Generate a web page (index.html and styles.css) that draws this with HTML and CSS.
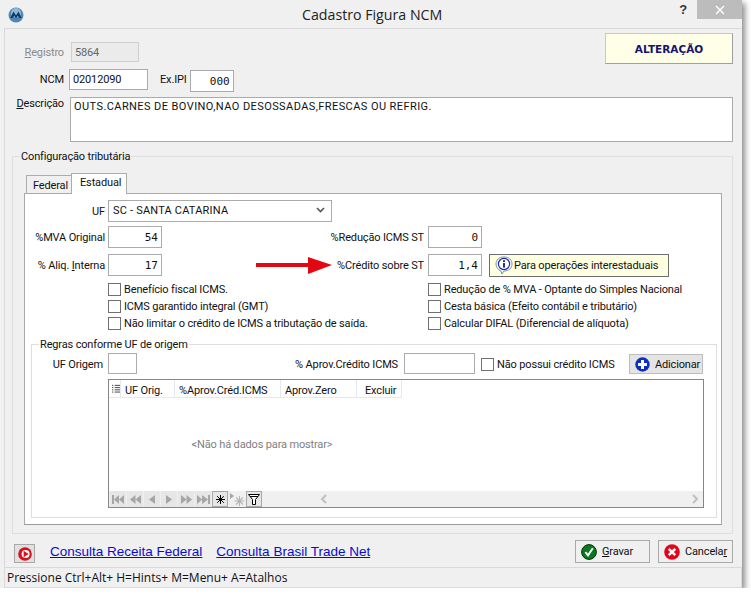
FILE: index.html
```html
<!DOCTYPE html>
<html lang="pt-BR">
<head>
    <meta charset="UTF-8">
    <meta name="viewport" content="width=device-width, initial-scale=1.0">
    <title>Cadastro Figura NCM</title>
    <link rel="stylesheet" href="styles.css">
</head>
<body>
    <div class="window">
        <div class="titlebar">
            <svg class="app-icon" width="16" height="16" viewBox="0 0 16 16">
                <circle cx="8" cy="8" r="7.5" fill="#4f86b5"/>
                <circle cx="8" cy="6" r="5" fill="#8fb8d8"/>
                <path d="M2.5 11 L5.5 4.5 L8 8.5 L10.5 4.5 L13.5 11 L11 11 L10 8.5 L8 11.5 L6 8.5 L5 11 Z" fill="#10385f"/>
            </svg>
            <span class="title">Cadastro Figura NCM</span>
            <span class="help">?</span>
            <span class="close">
                <svg width="10" height="10" viewBox="0 0 10 10"><path d="M1 1 L9 9 M9 1 L1 9" stroke="#fff" stroke-width="1.4"/></svg>
            </span>
        </div>

        <div class="client">
            <div class="head">
                <div class="head-fields">
                    <div class="row row-registro">
                        <label class="head-label disabled"><u>R</u>egistro</label>
                        <input class="input input-registro" type="text" value="5864" readonly>
                    </div>
                    <div class="row row-ncm">
                        <label class="head-label">NCM</label>
                        <input class="input input-ncm" type="text" value="02012090">
                        <label class="label-ipi">Ex.IPI</label>
                        <input class="input input-ipi num" type="text" value="000">
                    </div>
                </div>
                <div class="mode">ALTERAÇÃO</div>
            </div>
            <div class="row row-desc">
                <label class="head-label"><u>D</u>escrição</label>
                <textarea class="input input-desc">OUTS.CARNES DE BOVINO,NAO DESOSSADAS,FRESCAS OU REFRIG.</textarea>
            </div>

            <fieldset class="group">
                <legend>Configuração tributária</legend>
                <div class="tabs">
                    <div class="tab">Federal</div>
                    <div class="tab tab-active">Estadual</div>
                </div>
                <div class="panel">
                    <div class="row row-uf">
                        <label class="col-label">UF</label>
                        <div class="select">
                            <span>SC - SANTA CATARINA</span>
                            <svg width="9" height="6" viewBox="0 0 9 6"><path d="M1 1 L4.5 4.5 L8 1" fill="none" stroke="#555" stroke-width="1.6"/></svg>
                        </div>
                    </div>
                    <div class="row row-mva">
                        <label class="col-label">%MVA Original</label>
                        <input class="input input-pct num" type="text" value="54">
                        <div class="mid-label">%Redução ICMS ST</div>
                        <input class="input input-pct num input-right" type="text" value="0">
                    </div>
                    <div class="row row-aliq">
                        <label class="col-label">% Aliq. <u>I</u>nterna</label>
                        <input class="input input-pct num" type="text" value="17">
                        <div class="mid-label">
                            <svg class="arrow" width="76" height="17" viewBox="0 0 76 17">
                                <rect x="0" y="6" width="53" height="4" fill="#e30613"/>
                                <polygon points="52,0 76,8 52,17" fill="#e30613"/>
                            </svg>
                            %Crédito sobre ST
                        </div>
                        <input class="input input-pct num input-right" type="text" value="1,4">
                        <div class="hint">
                            <svg width="18" height="19" viewBox="0 0 18 19">
                                <path d="M9 1 C4 1 1 4 1 8 C1 11 3 14 6 15 L7 18 L9 15 C14 15 17 12 17 8 C17 4 14 1 9 1 Z" fill="#fff" stroke="#7d8fb0"/>
                                <circle cx="9" cy="8" r="5.6" fill="#fff" stroke="#1d2f9e" stroke-width="1.2"/>
                                <rect x="8" y="4.2" width="2" height="1.8" fill="#1d2f9e"/>
                                <rect x="8" y="7" width="2" height="4.6" fill="#1d2f9e"/>
                            </svg>
                            <span>Para operações interestaduais</span>
                        </div>
                    </div>
                    <div class="checks">
                        <label class="check"><input type="checkbox">Benefício fiscal ICMS.</label>
                        <label class="check"><input type="checkbox">Redução de % MVA - Optante do Simples Nacional</label>
                        <label class="check"><input type="checkbox">ICMS garantido integral (GMT)</label>
                        <label class="check"><input type="checkbox">Cesta básica (Efeito contábil e tributário)</label>
                        <label class="check"><input type="checkbox">Não limitar o crédito de ICMS a tributação de saída.</label>
                        <label class="check"><input type="checkbox">Calcular DIFAL (Diferencial de alíquota)</label>
                    </div>

                    <fieldset class="group group-rules">
                        <legend>Regras conforme UF de origem</legend>
                        <div class="row row-rules">
                            <label class="rules-label">UF Origem</label>
                            <input class="input input-uf" type="text">
                            <div class="aprov-label">% Aprov.Crédito ICMS</div>
                            <input class="input input-aprov" type="text">
                            <label class="check check-inline"><input type="checkbox">Não possui crédito ICMS</label>
                            <button class="btn btn-add">
                                <svg width="15" height="15" viewBox="0 0 15 15">
                                    <circle cx="7.5" cy="7.5" r="7.2" fill="#0b2fc4"/>
                                    <path d="M6 3 H9 V6 H12 V9 H9 V12 H6 V9 H3 V6 H6 Z" fill="#fff"/>
                                </svg>
                                Adicionar
                            </button>
                        </div>
                        <div class="grid">
                            <div class="grid-head">
                                <div class="cell cell-icon">
                                    <svg width="9" height="9" viewBox="0 0 9 9"><path d="M0 1 H1.5 M3 1 H9 M0 3.5 H1.5 M3 3.5 H9 M0 6 H1.5 M3 6 H9 M0 8.5 H1.5 M3 8.5 H9" stroke="#333"/></svg>
                                </div>
                                <div class="cell cell-uf">UF Orig.</div>
                                <div class="cell cell-aprov">%Aprov.Créd.ICMS</div>
                                <div class="cell cell-zero">Aprov.Zero</div>
                                <div class="cell cell-del">Excluir</div>
                            </div>
                            <div class="grid-empty">&lt;Não há dados para mostrar&gt;</div>
                            <div class="grid-nav">
                                <button class="nav"><svg width="13" height="9" viewBox="0 0 13 9"><path d="M0 0 H2 V9 H0 Z M7 0 V9 L2 4.5 Z M12 0 V9 L7 4.5 Z"/></svg></button>
                                <button class="nav"><svg width="11" height="9" viewBox="0 0 11 9"><path d="M5.5 0 V9 L0 4.5 Z M11 0 V9 L5.5 4.5 Z"/></svg></button>
                                <button class="nav"><svg width="6" height="9" viewBox="0 0 6 9"><path d="M6 0 V9 L0 4.5 Z"/></svg></button>
                                <button class="nav"><svg width="6" height="9" viewBox="0 0 6 9"><path d="M0 0 V9 L6 4.5 Z"/></svg></button>
                                <button class="nav"><svg width="11" height="9" viewBox="0 0 11 9"><path d="M0 0 V9 L5.5 4.5 Z M5.5 0 V9 L11 4.5 Z"/></svg></button>
                                <button class="nav"><svg width="13" height="9" viewBox="0 0 13 9"><path d="M0 0 V9 L5 4.5 Z M5 0 V9 L11 4.5 Z M11 0 H13 V9 H11 Z"/></svg></button>
                                <button class="nav nav-on"><svg width="9" height="9" viewBox="0 0 9 9"><path d="M4.5 0 V9 M0 4.5 H9 M1.2 1.2 L7.8 7.8 M7.8 1.2 L1.2 7.8" stroke="#000" stroke-width="1"/></svg></button>
                                <button class="nav nav-dim"><svg width="15" height="13" viewBox="0 0 15 13"><path d="M0 0 L4 3 L0 6 Z" fill="#a9a9a9"/><path d="M9.5 3 V13 M4.5 8 H14.5 M6 4.5 L13 11.5 M13 4.5 L6 11.5" stroke="#b5b5b5" stroke-width="1.1"/></svg></button>
                                <button class="nav nav-on nav-filter"><svg width="12" height="11" viewBox="0 0 12 11"><path d="M0.5 0.5 H11.5 L7.5 5.5 V10.5 H4.5 V5.5 Z M2 2.5 H10" fill="#fff" stroke="#000"/></svg></button>
                                <svg class="scroll-left" width="7" height="10" viewBox="0 0 7 10"><path d="M6 1 L2 5 L6 9" fill="none" stroke="#c0c0c0" stroke-width="2"/></svg>
                                <svg class="scroll-right" width="7" height="10" viewBox="0 0 7 10"><path d="M1 1 L5 5 L1 9" fill="none" stroke="#c0c0c0" stroke-width="2"/></svg>
                            </div>
                        </div>
                    </fieldset>
                </div>
            </fieldset>

            <div class="foot">
                <button class="btn btn-play">
                    <svg width="14" height="14" viewBox="0 0 14 14">
                        <circle cx="7" cy="7" r="6.8" fill="#d5121e"/>
                        <circle cx="7.6" cy="7" r="4" fill="#fff"/>
                        <polygon points="5.6,3.8 10.6,7 5.6,10.2" fill="#d5121e"/>
                    </svg>
                </button>
                <a class="link" href="#">Consulta Receita Federal</a>
                <a class="link" href="#">Consulta Brasil Trade Net</a>
                <div class="actions">
                    <button class="btn btn-action">
                        <svg width="16" height="16" viewBox="0 0 16 16">
                            <circle cx="8" cy="8" r="7.4" fill="#0a7a1e" stroke="#04320c"/>
                            <path d="M4.4 8.2 L7 11.4 L11.8 4.2" fill="none" stroke="#fff" stroke-width="2"/>
                        </svg>
                        <span><u>G</u>ravar</span>
                    </button>
                    <button class="btn btn-action">
                        <svg width="16" height="16" viewBox="0 0 16 16">
                            <circle cx="8" cy="8" r="7.8" fill="#e3061b"/>
                            <path d="M4.8 4.8 L11.2 11.2 M11.2 4.8 L4.8 11.2" stroke="#fff" stroke-width="2.6"/>
                        </svg>
                        <span>Cancela<u>r</u></span>
                    </button>
                </div>
            </div>

            <div class="status">Pressione Ctrl+Alt+ H=Hints+ M=Menu+ A=Atalhos</div>
        </div>
    </div>
</body>
</html>
```

FILE: styles.css
```css
* {
    box-sizing: border-box;
}
body {
    margin: 0;
    background-color: #fff;
    font-family: Roboto, Arial, sans-serif;
    font-size: 11px;
    letter-spacing: -0.15px;
    color: #111;
}
.window {
    display: flex;
    flex-direction: column;
    width: 742px;
    height: 588px;
    background-color: #f0f0f0;
    box-shadow: 3px 3px 6px rgba(0, 0, 0, 0.45);
}

/* title bar */
.titlebar {
    display: flex;
    align-items: flex-start;
    height: 28px;
    flex: none;
}
.app-icon {
    margin: 7px 0 0 8px;
}
.title {
    margin: 5px 0 0 278px;
    font-family: "Open Sans", sans-serif;
    font-size: 14.2px;
    letter-spacing: 0;
    color: #222;
    white-space: nowrap;
}
.help {
    margin: 2px 0 0 auto;
    font-family: "Liberation Sans", sans-serif;
    font-weight: bold;
    font-size: 13px;
    color: #333;
}
.close {
    display: flex;
    align-items: center;
    justify-content: center;
    width: 45px;
    height: 19px;
    margin-left: 10px;
    background-color: #bcbcbc;
}

/* client area */
.client {
    flex: 1;
    display: flex;
    flex-direction: column;
    margin-left: 4px;
    padding: 0 9px 0 7px;
    border-top: 1px solid #d9d9d9;
    border-left: 1px solid #d9d9d9;
}
.row {
    display: flex;
    align-items: center;
}
.input {
    height: 21px;
    padding: 0 3px;
    border: 1px solid #ababab;
    border-radius: 0;
    background-color: #fff;
    font-family: inherit;
    font-size: inherit;
    letter-spacing: inherit;
    color: #111;
    outline: none;
}
.num {
    padding-right: 3px;
    font-family: "DejaVu Sans Mono", monospace;
    font-size: 11px;
    letter-spacing: 0;
    text-align: right;
}
.head {
    display: flex;
    justify-content: space-between;
    height: 61px;
}
.head-fields {
    padding-left: 3px;
}
.head-label {
    width: 49px;
    text-align: right;
    white-space: nowrap;
}
.disabled {
    color: #8a8a8a;
}
.row-registro {
    margin-top: 13px;
}
.input-registro {
    width: 68px;
    height: 20px;
    margin-left: 7px;
    border-color: #cfcfcf;
    background-color: #ebebeb;
    color: #666;
}
.row-ncm {
    margin-top: 7px;
    align-items: flex-start;
}
.row-ncm .head-label {
    padding-top: 4px;
}
.input-ncm {
    width: 79px;
    margin-left: 5px;
}
.label-ipi {
    margin: 4px 0 0 12px;
}
.input-ipi {
    width: 44px;
    height: 22px;
    margin: 1px 0 0 3px;
}
.mode {
    width: 128px;
    height: 31px;
    margin-top: 4px;
    border: 1px solid #a0a0a0;
    border-top-color: #c8c8c8;
    border-left-color: #c8c8c8;
    background-color: #ffffe8;
    font-family: "DejaVu Sans", sans-serif;
    font-size: 10.5px;
    font-weight: bold;
    letter-spacing: 0;
    line-height: 31px;
    text-align: center;
    color: #14146e;
}
.row-desc {
    align-items: flex-start;
    margin-top: 7px;
    padding-left: 3px;
}
.input-desc {
    width: 663px;
    height: 45px;
    margin-left: 6px;
    padding: 2px 3px;
    letter-spacing: 0.42px;
    resize: none;
    overflow: hidden;
}

/* groups */
.group {
    margin: 7px 0 0;
    padding: 0 0 8px;
    border: 1px solid #dedede;
    min-width: 0;
}
.group legend {
    height: 14px;
    margin-left: 7px;
    padding: 0 1px;
    line-height: 16px;
}

/* tabs */
.tabs {
    display: flex;
    align-items: flex-end;
    height: 20px;
    margin: 10px 0 0 13px;
}
.tab {
    width: 45px;
    height: 18px;
    padding-left: 6px;
    border: 1px solid #acacac;
    border-bottom: none;
    border-right: none;
    background-color: #f0f0f0;
    line-height: 20px;
}
.tab-active {
    position: relative;
    z-index: 1;
    width: 56px;
    height: 21px;
    margin-bottom: -1px;
    padding-left: 8px;
    border-right: 1px solid #acacac;
    background-color: #fff;
    line-height: 18px;
}
.panel {
    width: 698px;
    height: 332px;
    margin-left: 11px;
    border: 1px solid #a9a9a9;
    border-bottom-color: #9a9a9a;
    background-color: #fff;
}
.col-label {
    width: 80px;
    text-align: right;
    white-space: nowrap;
}
.row-uf {
    margin-top: 6px;
}
.select {
    display: flex;
    align-items: center;
    justify-content: space-between;
    width: 224px;
    height: 22px;
    margin-left: 3px;
    padding: 0 6px 2px 4px;
    border: 1px solid #ababab;
    letter-spacing: 0.2px;
}
.row-mva,
.row-aliq {
    height: 22px;
}
.row-mva {
    margin-top: 4px;
}
.row-aliq {
    margin-top: 6px;
}
.input-pct {
    width: 54px;
    height: 22px;
    margin-left: 3px;
}
.input-right {
    margin-left: 4px;
}
.mid-label {
    display: flex;
    align-items: center;
    justify-content: flex-end;
    width: 262px;
    white-space: nowrap;
}
.arrow {
    margin-right: 5px;
}
.hint {
    display: flex;
    align-items: center;
    gap: 1px;
    width: 180px;
    height: 23px;
    margin: 1px 0 0 7px;
    padding-left: 5px;
    border: 1px solid #6e6e6e;
    background-color: #ffffe1;
    white-space: nowrap;
}
.checks {
    display: grid;
    grid-template-columns: 320px 1fr;
    grid-auto-rows: 17px;
    margin-top: 5px;
    padding-left: 83px;
}
.check {
    display: flex;
    align-items: center;
    white-space: nowrap;
}
.check input {
    appearance: none;
    width: 13px;
    height: 13px;
    margin: 0 3px 0 0;
    border: 1px solid #707070;
    background-color: #fff;
}

/* regras */
.group-rules {
    width: 686px;
    height: 181px;
    margin: 5px 0 0 6px;
    padding: 0;
}
.row-rules {
    height: 21px;
    margin-top: 2px;
}
.rules-label {
    width: 71px;
    padding-top: 2px;
    text-align: right;
}
.input-uf {
    width: 29px;
    margin-left: 5px;
}
.aprov-label {
    width: 261px;
    padding-top: 2px;
    text-align: right;
    white-space: nowrap;
}
.input-aprov {
    width: 71px;
    margin-left: 6px;
}
.check-inline {
    margin-left: 6px;
    padding-top: 2px;
    width: 148px;
}
.btn {
    display: flex;
    align-items: center;
    justify-content: center;
    border: 1px solid #a9a9a9;
    background-color: #ececec;
    font-family: inherit;
    font-size: inherit;
    letter-spacing: inherit;
    color: #111;
    padding: 0;
}
.btn-add {
    justify-content: flex-start;
    gap: 5px;
    width: 74px;
    height: 20px;
    margin-top: 1px;
    padding-left: 5px;
    border-color: #bdbdbd;
    background-color: #e4e4e4;
}

/* grade */
.grid {
    display: flex;
    flex-direction: column;
    width: 596px;
    height: 129px;
    margin: 5px 0 0 76px;
    border: 1px solid #868686;
}
.grid-head {
    display: flex;
    flex: none;
    height: 18px;
}
.cell {
    display: flex;
    align-items: center;
    border-right: 1px solid #e3e9f2;
    border-bottom: 1px solid #e3e9f2;
    white-space: nowrap;
}
.cell-icon {
    width: 12px;
    justify-content: center;
    padding-left: 3px;
}
.cell-uf {
    width: 54px;
    padding: 3px 0 0 4px;
}
.cell-aprov {
    width: 106px;
    padding: 3px 0 0 4px;
}
.cell-zero {
    width: 76px;
    padding: 3px 0 0 4px;
}
.cell-del {
    width: 45px;
    padding: 3px 0 0 8px;
}
.grid-empty {
    flex: 1;
    width: 306px;
    display: flex;
    align-items: center;
    justify-content: center;
    color: #808080;
}
.grid-nav {
    display: flex;
    align-items: center;
    flex: none;
    height: 16px;
    padding-left: 1px;
    background-color: #f0f0f0;
}
.nav {
    display: flex;
    align-items: center;
    justify-content: center;
    width: 16px;
    height: 16px;
    margin-right: 1px;
    padding: 0;
    border: none;
    background-color: #e6e6e6;
}
.nav path {
    fill: #a6a6a6;
}
.nav-on {
    border: 1px solid #a8a8a8;
}
.nav-on path {
    fill: none;
}
.nav-filter path {
    fill: #fff;
}
.nav-dim {
    background-color: #f0f0f0;
}
.nav-dim path:last-child {
    fill: none;
}
.scroll-left {
    margin-left: 57px;
}
.scroll-right {
    margin-left: auto;
    margin-right: 4px;
}

/* rodape */
.foot {
    display: flex;
    align-items: center;
    flex: none;
    height: 23px;
    margin-top: 6px;
    padding-left: 2px;
}
.btn-play {
    width: 21px;
    height: 19px;
    margin-top: 4px;
    background-color: #e0e0e0;
}
.link {
    margin-left: 15px;
    font-family: "Liberation Sans", sans-serif;
    font-size: 13.5px;
    letter-spacing: 0;
    color: #0a0ad2;
    white-space: nowrap;
}
.link + .link {
    margin-left: 14px;
}
.actions {
    display: flex;
    gap: 8px;
    margin-left: auto;
}
.btn-action {
    justify-content: flex-start;
    gap: 5px;
    width: 75px;
    height: 23px;
    padding-left: 5px;
    background-color: #f0f0f0;
}
.status {
    flex: none;
    height: 21px;
    margin: 4px -9px 0 -7px;
    padding-left: 2px;
    border-top: 1px solid #d9d9d9;
    border-bottom: 1px solid #d9d9d9;
    border-right: 1px solid #d9d9d9;
    font-family: "Open Sans", sans-serif;
    font-size: 12px;
    letter-spacing: 0;
    line-height: 19px;
}
```
